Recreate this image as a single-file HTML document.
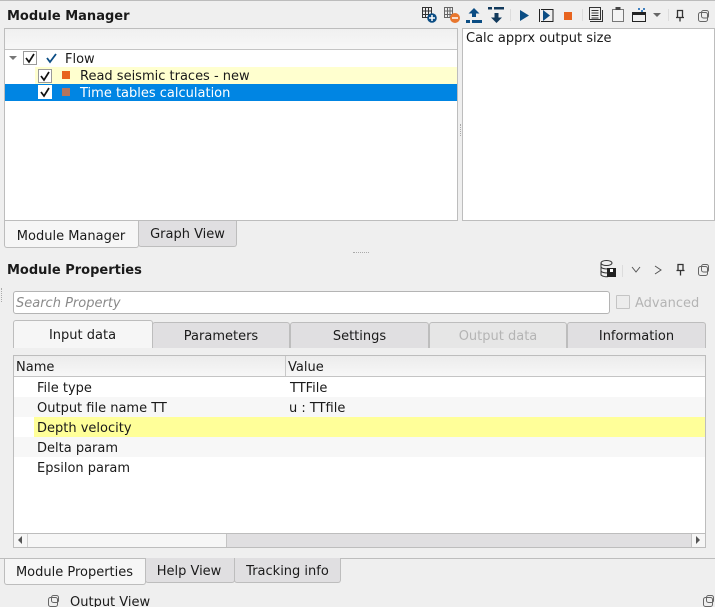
<!DOCTYPE html>
<html><head><meta charset="utf-8">
<style>
html,body{margin:0;padding:0;width:715px;height:607px;overflow:hidden;background:#efefef}
body{position:relative;font:13px/20px "DejaVu Sans",sans-serif;color:#1a1a1a}
.a,.t{position:absolute;white-space:nowrap}
.a{box-sizing:border-box}
.b{font-weight:bold}
.tab{position:absolute;box-sizing:border-box;background:#e0dfe1;border:1px solid #bdbdbd;text-align:center;border-radius:0 0 3px 3px}
.tab.on{background:#f6f6f6;z-index:2}
.ttop{border-radius:3px 3px 0 0}
.cb{position:absolute;box-sizing:border-box;width:14px;height:14px;background:#fff;border:1px solid #9a9a9a}
svg{position:absolute;overflow:visible}
</style></head><body>
<div class="a" style="left:0;top:0;width:715px;height:1px;background:#bcbcbc"></div>
<div class="t b" style="left:7px;top:7px">Module Manager</div>

<svg style="left:0;top:0" width="715" height="30">
<g fill="none" stroke="#333" stroke-width="1"><path d="M422.500 7.500h9v10h-9zM422.500 11h9M422.500 14.500h9M425.500 7.500v10M428.500 7.500v10"/></g>
<circle cx="432" cy="18" r="4.800" fill="#0b4d84"/><path d="M429 18h6M432 15v6" stroke="#fff" stroke-width="1.500"/>
<g fill="none" stroke="#666" stroke-width="1"><path d="M444.500 7.500h8v10h-8zM444.500 11h8M444.500 14.500h8M447.500 7.500v10M450 7.500v10"/></g>
<circle cx="455" cy="18" r="5" fill="#e8762d"/><path d="M452 18h6" stroke="#fff" stroke-width="1.500"/>
<path d="M474 8l-5.500 5.500h3.500v3.500h4v-3.500h3.500zM466 20h4v3h-4zM472 20h10v3h-10z" fill="#0b4d84"/>
<path d="M496.500 23l-5.500-5.500h3.500v-4.500h4v4.500h3.500zM488 7h4v2.500h-4zM494 7h10v2.500h-10z" fill="#123a5c"/>
<path d="M510.500 9v12" stroke="#dcdcdc"/>
<path d="M520 10l9 5.500-9 5.500z" fill="#0b4d84"/>
<path d="M541 9.500h12v12h-12" fill="none" stroke="#222"/><path d="M539.500 9v13" stroke="#222"/><path d="M543 10l7 5.500-7 5.500z" fill="#0b4d84"/>
<rect x="564" y="12" width="8" height="8" fill="#e8641f"/>
<path d="M582.500 9v12" stroke="#dcdcdc"/>
<path d="M589.500 7.500h11v12h-11z" fill="none" stroke="#333"/><path d="M591.500 10.500h7M591.500 13h7M591.500 15.500h7M591.500 18h7M590 21.500h12M602.500 10v12" stroke="#333" fill="none"/>
<path d="M612.500 9.500h11v12h-11z" fill="#f3f3f3" stroke="#777"/><rect x="615.500" y="7" width="5" height="3" fill="#444"/>
<path d="M632.500 13.500h13v8h-13z" fill="none" stroke="#222"/><path d="M632 12h14v3h-14z" fill="#222"/>
<path d="M638 8h2v2h-2zM643 8h2v2h-2zM641 10h2v2h-2z" fill="#3f80c0"/>
<path d="M653 13h8l-4 4z" fill="#666"/>
<path d="M668.500 9v12" stroke="#dcdcdc"/>
<path d="M677.500 10.500h5v7h-5zM676 17.500h8M680 17.500v4" fill="none" stroke="#333" stroke-width="1.300"/>
<g fill="none" stroke="#666"><rect x="698.500" y="12.500" width="9" height="9" rx="2"/><rect x="701.500" y="10.500" width="7" height="7.500" rx="2"/></g>
</svg>

<div class="a" style="left:4px;top:28px;width:454px;height:193px;background:#fff;border:1px solid #bdbdbd"></div>
<div class="a" style="left:5px;top:29px;width:452px;height:21px;background:linear-gradient(#f0f0f0,#f7f7f7);border-bottom:1px solid #c4c4c4"></div>
<svg style="left:0;top:50px" width="60" height="20"><path d="M9 6h8l-4 4z" fill="#777"/></svg>
<div class="cb" style="left:23px;top:51px"></div>
<svg style="left:23px;top:51px" width="14" height="14"><path d="M3 7l3 4 5-8" fill="none" stroke="#111" stroke-width="1.700"/></svg>
<svg style="left:46px;top:52px" width="12" height="12"><path d="M1 6l3 4 6-8" fill="none" stroke="#0b4d84" stroke-width="1.800"/></svg>
<div class="t" style="left:65px;top:50px">Flow</div>
<div class="a" style="left:35px;top:67px;width:422px;height:17px;background:#ffffcf"></div>
<div class="cb" style="left:38px;top:69px"></div>
<svg style="left:38px;top:69px" width="14" height="14"><path d="M3 7l3 4 5-8" fill="none" stroke="#111" stroke-width="1.700"/></svg>
<div class="a" style="left:62px;top:71px;width:8px;height:8px;background:#e8641f"></div>
<div class="t" style="left:80px;top:67px">Read seismic traces - new</div>
<div class="a" style="left:5px;top:84px;width:452px;height:17px;background:#0085e3"></div>
<div class="cb" style="left:38px;top:85px;border-color:#fff"></div>
<svg style="left:38px;top:85px" width="14" height="14"><path d="M3 7l3 4 5-8" fill="none" stroke="#111" stroke-width="1.700"/></svg>
<div class="a" style="left:62px;top:88px;width:8px;height:8px;background:#b4745e"></div>
<div class="t" style="left:80px;top:84px;color:#fff">Time tables calculation</div>

<div class="a" style="left:460px;top:124px;width:1px;height:12px;border-left:1px dotted #aaa"></div>
<div class="a" style="left:462px;top:28px;width:253px;height:193px;background:#fff;border:1px solid #bdbdbd"></div>
<div class="t" style="left:466px;top:29px">Calc apprx output size</div>

<div class="tab on" style="left:4px;top:221px;width:135px;height:27px;line-height:31px;border-top:0;padding-right:1px">Module Manager</div>
<div class="tab" style="left:138px;top:221px;width:99px;height:26px;line-height:27px;border-top:0">Graph View</div>
<div class="a" style="left:353px;top:252px;width:16px;height:1px;border-top:1px dotted #aaa"></div>

<div class="t b" style="left:7px;top:261px">Module Properties</div>
<svg style="left:0;top:255px" width="715" height="30">
<g fill="none" stroke="#333"><ellipse cx="606.500" cy="8" rx="5.500" ry="2.500"/><path d="M601 8v12c2 2 6 2 7 1.500M601 12c1 2 5 2 7 2M601 16c1 2 5 2 7 2"/></g>
<rect x="607" y="13" width="9" height="9" fill="#222"/><rect x="610" y="14" width="3" height="3" fill="#fff"/>
<path d="M622.500 10v12" stroke="#dcdcdc"/>
<path d="M632 12l4 5 4-5M655 11l6 4-6 4" fill="none" stroke="#555"/>
<path d="M678 9.500h5v6h-5zM676.500 15.500h8M680.500 15.500v5" fill="none" stroke="#333" stroke-width="1.300"/>
<g fill="none" stroke="#666"><rect x="698.500" y="11.500" width="9" height="9" rx="2"/><rect x="701.500" y="9.500" width="7" height="7.500" rx="2"/></g>
</svg>

<div class="a" style="left:1px;top:288px;height:14px;border-left:1px dotted #aaa"></div>
<div class="a" style="left:13px;top:291px;width:597px;height:23px;background:#fff;border:1px solid #b4b4b4;border-radius:3px"></div>
<div class="t" style="left:16px;top:294px;font-style:italic;color:#8a8a8a">Search Property</div>
<div class="a" style="left:616px;top:295px;width:14px;height:14px;border:1px solid #c4c4c4;background:#ececec;border-radius:1px"></div>
<div class="t" style="left:635px;top:294px;color:#b4b4b4">Advanced</div>

<div class="tab ttop" style="left:152px;top:322px;width:138px;height:26px;line-height:27px;border-bottom:0">Parameters</div>
<div class="tab ttop" style="left:290px;top:322px;width:139px;height:26px;line-height:27px;border-bottom:0">Settings</div>
<div class="tab ttop" style="left:429px;top:322px;width:138px;height:26px;line-height:27px;border-bottom:0;color:#b4b4b4;background:#e6e6e6">Output data</div>
<div class="tab ttop" style="left:567px;top:322px;width:139px;height:26px;line-height:27px;border-bottom:0">Information</div>
<div class="tab ttop on" style="left:13px;top:320px;width:140px;height:28px;line-height:30px;border-bottom:0;padding-right:1px">Input data</div>

<div class="a" style="left:13px;top:355px;width:693px;height:193px;background:#fff;border:1px solid #bdbdbd"></div>
<div class="a" style="left:14px;top:356px;width:691px;height:21px;background:linear-gradient(#ececec,#f7f7f7);border-bottom:1px solid #c4c4c4"></div>
<div class="a" style="left:285px;top:356px;width:1px;height:20px;background:#c8c8c8"></div>
<div class="t" style="left:16px;top:358px">Name</div>
<div class="t" style="left:288px;top:358px">Value</div>
<div class="a" style="left:14px;top:397px;width:691px;height:20px;background:#f7f7f7"></div>
<div class="a" style="left:34px;top:417px;width:671px;height:20px;background:#ffff99"></div>
<div class="a" style="left:14px;top:437px;width:691px;height:20px;background:#f7f7f7"></div>
<div class="t" style="left:37px;top:379px">File type</div>
<div class="t" style="left:290px;top:379px">TTFile</div>
<div class="t" style="left:37px;top:399px">Output file name TT</div>
<div class="t" style="left:289px;top:399px">u : TTfile</div>
<div class="t" style="left:37px;top:419px">Depth velocity</div>
<div class="t" style="left:37px;top:439px">Delta param</div>
<div class="t" style="left:37px;top:459px">Epsilon param</div>

<div class="a" style="left:14px;top:533px;width:691px;height:14px;background:#e0dfe1;border-top:1px solid #bdbdbd"></div>
<div class="a" style="left:14px;top:534px;width:213px;height:13px;background:#f6f6f6;border-right:1px solid #c4c4c4"></div>
<div class="a" style="left:27px;top:534px;width:1px;height:13px;background:#d0d0d0"></div>
<div class="a" style="left:691px;top:534px;width:14px;height:13px;background:#f6f6f6;border-left:1px solid #c4c4c4"></div>
<svg style="left:0;top:530px" width="715" height="20"><path d="M22 6v8l-4-4zM696 6v8l4-4z" fill="#555"/></svg>

<div class="a" style="left:0;top:558px;width:715px;height:1px;background:#bdbdbd"></div>
<div class="tab on" style="left:4px;top:559px;width:142px;height:26px;line-height:28px;border-top:0;padding-right:1px">Module Properties</div>
<div class="tab" style="left:145px;top:558px;width:90px;height:25px;line-height:27px;border-top:0;padding-right:2px">Help View</div>
<div class="tab" style="left:234px;top:558px;width:107px;height:25px;line-height:27px;border-top:0">Tracking info</div>

<svg style="left:0;top:590px" width="715" height="17">
<g fill="none" stroke="#666"><rect x="48.500" y="7.500" width="9" height="9" rx="2"/><rect x="51.500" y="5.500" width="7" height="7" rx="2"/></g>
<g fill="none" stroke="#666"><rect x="703.500" y="7.500" width="9" height="9" rx="2"/><rect x="706.500" y="5.500" width="7" height="7" rx="2"/></g>
</svg>
<div class="t" style="left:70px;top:593px">Output View</div>
</body></html>
